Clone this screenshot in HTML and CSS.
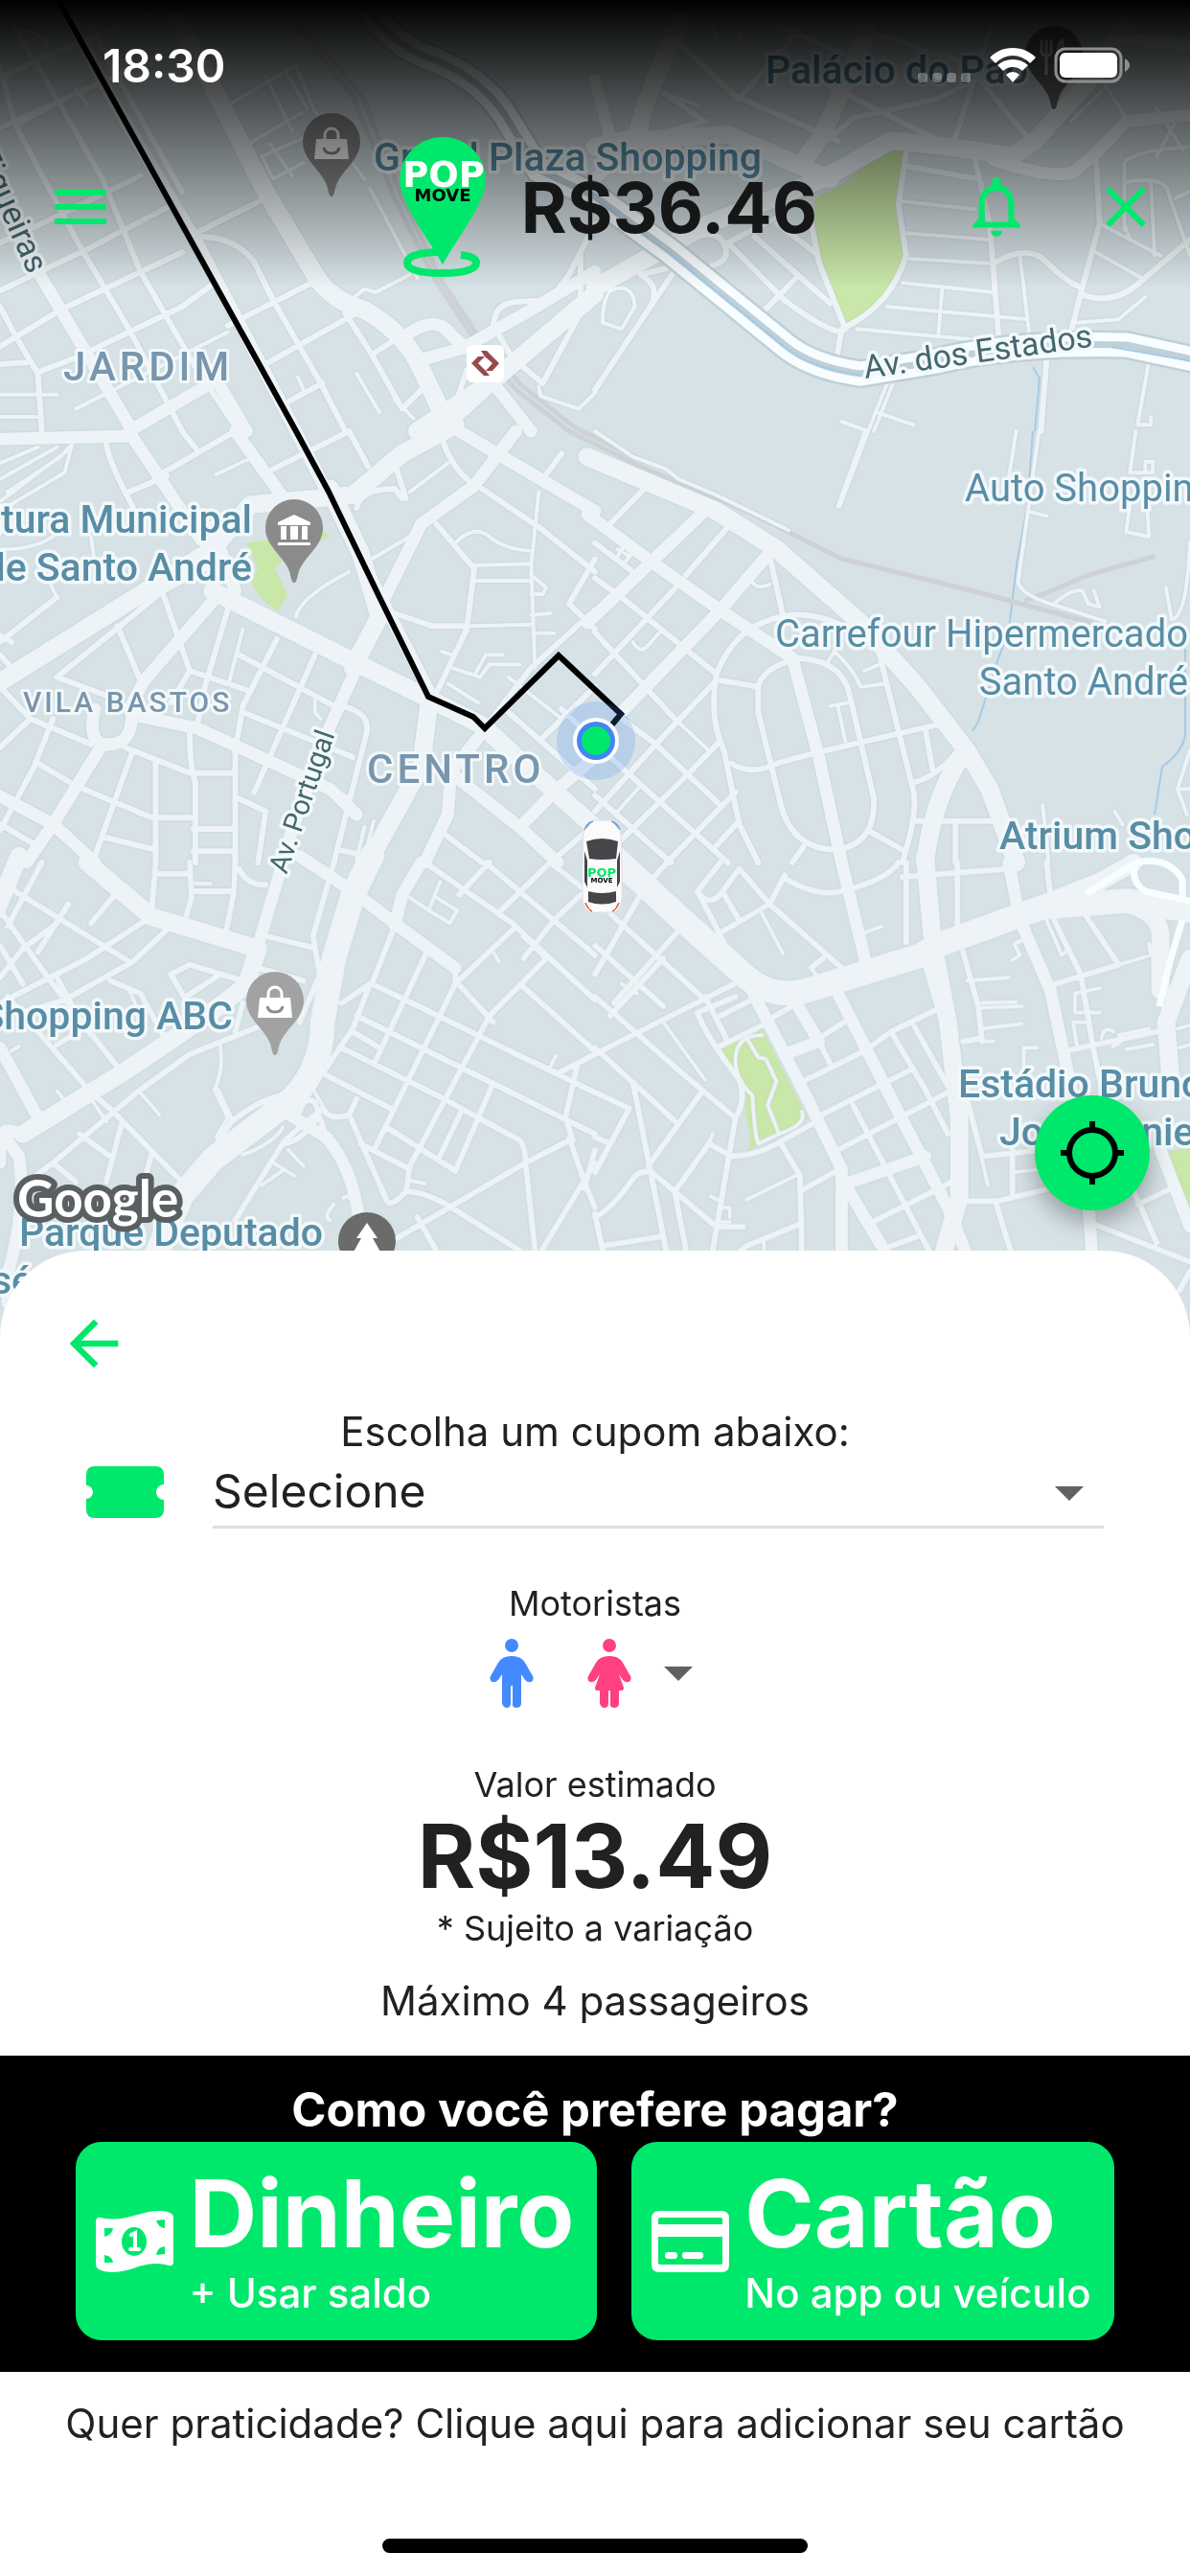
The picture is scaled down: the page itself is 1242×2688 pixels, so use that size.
FILE: index.html
```html
<!DOCTYPE html>
<html lang="pt-BR">
<head>
    <meta charset="UTF-8">
    <meta name="viewport" content="width=device-width, initial-scale=1.0">
    <title>Pop Move</title>
    <link rel="stylesheet" href="styles.css">
</head>
<body>
    <main class="app">
        <section class="hero">
            <svg class="map" viewBox="0 0 1242 1420" preserveAspectRatio="xMidYMin slice" role="img" aria-label="Mapa">
                <defs>
                    <path id="pin" d="M0 0C-3 0-3-6-5-12C-11-28-30-38-30-57A30 30 0 1 1 30-57C30-38 11-28 5-12C3-6 3 0 0 0Z"/>
                    <g id="bag">
                        <path d="M-16-60H16L18-39H-18Z" fill="#fff"/>
                        <path d="M-7-60V-64A7 7 0 0 1 7-64V-60" fill="none" stroke="#fff" stroke-width="3"/>
                        <path d="M-8-51Q-7-45 0-45T8-51" fill="none" stroke="#8a8a8a" stroke-width="3"/>
                    </g>
                    <linearGradient id="shade" x1="0" y1="0" x2="0" y2="1">
                        <stop offset="0" stop-color="#000"/>
                        <stop offset="1" stop-color="#000" stop-opacity="0"/>
                    </linearGradient>
                </defs>
                <rect width="1242" height="1420" fill="#d6e2e6"/>

                <!-- parks -->
                <g class="park">
                    <path transform="translate(621 0) scale(.396 .3333)" d="M820 460L790 640L815 800Q790 950 665 1020L600 830Q570 700 580 620L650 580L740 490Q770 460 820 460Z"/>
                    <path transform="translate(0 450) scale(.396 .3333)" d="M650 350L700 340L850 310L870 330L750 400L725 430L757 510L735 563Q690 540 660 470L680 430Z"/>
                    <path transform="translate(621 900) scale(.396 .3333)" d="M330 585L440 520L560 800L480 850L400 905Q420 870 395 790Q405 720 380 670ZM1490 910L1568 890V1110Z"/>
                </g>

                <!-- water and rail -->
                <path class="water" d="M1078 450L1072 530L1061 590L1053 657L1041 690L1021 753L1015 763M1237 677V767Q1234 785 1213 800L1205 850M1078 383L1085 395L1080 450"/>
                <path class="rail" d="M301 17L368 100L412 207L455 293L499 360L539 407L594 450L669 487L779 533L878 583L1017 617L1140 650M1069 627L1096 617L1136 600L1206 580"/>
                <path class="rail" d="M308 17L378 100L420 207L461 293L505 360L545 403L600 446L673 482"/>

                <g class="roads">
                    <!-- north west -->
                    <g transform="translate(0 0) scale(.396 .3333)">
                        <path class="r4" d="M470 60L700 600Q760 720 830 860Q870 940 960 970Q1050 1030 1100 1130L1180 1330M1100 1350L1290 1200L1568 920"/>
                        <path class="r3" d="M160 0L300 320L520 760L780 1350M-20 590L90 830L350 1350M340 1350L570 1190L650 1350M1070 1050Q1150 980 1190 1050L1230 1090M1100 1130L1220 1090L1400 970L1568 850M1300 1200L1400 1350M1180 1330L1300 1200"/>
                        <path class="r2" d="M0 245L150 160L260 110L420 30M0 400L300 240L380 190M0 760L110 700L370 550M0 910L230 780L440 650M0 1085L160 970L480 790M100 1165L200 1120L480 960L560 890M600 1020L830 880M700 1140L940 980M740 1270L850 1200M0 210L40 390L210 770L340 1030L480 1350M20 50L150 310L270 560L370 850M210 0L300 220L480 600M0 960L40 1050L100 1170L110 1350M370 850L520 1160L630 1350M500 740L700 620M520 740Q620 740 670 820L720 940L850 1210L910 1350M40 390L140 330M0 1140L70 1135M910 980L980 1110L1060 1280M980 1110L1060 1050M1230 1160L1180 1340M1060 1280L1120 1210M1300 1030Q1300 950 1360 945L1450 940L1500 860L1568 700M1310 1040L1350 1120L1430 1200L1530 980V800"/>
                        <path class="r1" d="M600 330L780 205L830 350L960 560M655 450L800 350M690 490L840 410M700 240L770 410M750 220L810 340M690 490L720 560L800 510M710 450L770 550M200 1280L600 1040M0 1235H150M0 1305H110M50 100Q100 90 130 150M200 280L230 330M975 590L1100 870M935 930L960 905L990 915L1080 860M940 1170L1000 1290M1040 1250L1090 1310M785 1180L800 1220M1420 1210L1425 1240L1525 1280L1568 1230"/>
                    </g>
                    <!-- north east -->
                    <g transform="translate(621 0) scale(.396 .3333)">
                        <path class="r4" d="M230 60Q130 300 110 430L0 460M100 440L350 420L620 560M720 90L600 420L540 520M0 900L300 700L600 560L780 440Q900 450 1100 490L1160 440L1290 270L1400 80"/>
                        <path class="r3" d="M0 250L40 430M110 430L0 560M1050 500Q1200 560 1260 540L1320 480L1400 380L1568 360M1380 120L1568 140"/>
                        <path class="r2" d="M100 0L370 300L640 440M180 290L290 380L100 440M380 310L560 60M620 430L680 370L900 310L1180 150M620 270L890 430M440 60L640 160M700 90L980 200M980 200L1140 430M1050 60L950 430M820 480L800 640L820 800Q780 960 650 1030L630 1170M660 1030L590 820L570 700M820 520L1010 560M1000 490L1040 700L1065 1070M1050 825Q1140 760 1190 820Q1240 880 1280 900M1320 480L1330 700L1280 920L1250 1060M1280 920Q1360 960 1430 890L1568 750M350 760L500 940Q600 1030 650 1040M350 760L480 680M420 740L620 950M480 700L580 790M440 980L530 870M0 1220L140 970L220 830M1190 1130L1175 1350M220 830L120 860Q180 900 140 970M230 760Q330 700 345 780Q350 820 310 830"/>
                        <path class="r1" d="M810 630L1000 655M820 730L1040 750M830 810L1050 825M810 885L1050 915M770 960L1140 1000M690 1030L1060 1070M1120 800L1145 1050M915 900L905 1050M1330 700L1490 800M1320 790L1440 870M1395 720V510Q1420 470 1568 460M1400 570Q1500 550 1510 600L1568 800M1465 570L1475 800M1410 750L1395 700M770 1200L720 1350M785 1200L735 1350M650 1320L720 1350M740 1290L840 1330M1460 1130L1430 1330M1270 1010L1380 1000L1450 930M1400 370L1330 240M1540 360L1480 490M1480 340L1550 470M1530 620L1568 600M1255 380L1340 280M40 910Q100 880 105 960L70 1030L20 1010Q20 940 40 910M1430 1330H1465V1305M320 130L300 30M380 120L420 40M180 290L270 330"/>
                    </g>
                    <!-- west -->
                    <g transform="translate(0 450) scale(.396 .3333)">
                        <path class="r4" d="M-20 800L560 370L660 230L930 200L1060 70L1200 -20M560 500L930 720L1100 820L1270 920L1370 1030L1568 1240M870 180L950 380L1000 580L930 740"/>
                        <path class="r3" d="M0 25L340 15M350 20L530 340M620 0L760 230M560 300L620 500M780 0L1150 860M990 580L1110 290L1250 170L1360 0M1210 0L1568 250M570 520L380 780L345 860Q360 990 270 980Q230 960 250 870M360 890L520 930L870 1120L940 1200M270 980L140 1230L70 1350M-20 1130L140 1230L250 1350M940 740L860 950L740 1350M1190 1040L1180 1200L1120 1350M1260 960L1180 1080M1200 1080L1370 1240L1470 1350M1370 1240L1460 1130L1568 1020"/>
                        <path class="r4" d="M1130 860L1110 1050L970 1350"/>
                        <path class="r2" d="M1568 560L1400 740L1270 940M150 770L430 500L590 400M0 660L150 520M150 770L310 840M0 640L30 660M310 610L370 780M430 510L500 750L650 810M600 560L540 800L520 920M730 650L640 860L620 1000V1350M830 700L670 1130M630 700L880 860M640 880L930 1020M500 750L450 850M500 940Q500 1050 515 1100V1350M330 990L500 1070H620M200 1110L400 1210H510M410 1030V1350M270 1270L410 1310M350 1000L250 1330M80 900L240 980M80 900L0 990M100 1040L200 1110M140 900L90 1050L0 1250M0 1230L100 1300M0 800L80 900M510 1245H620M510 1315H620M900 860Q980 880 965 950L880 1350M630 1150L700 1190L680 1350M820 1100L910 1145M890 1310L950 1325M920 0L970 110M1040 100L1070 210M940 240Q950 180 1040 180L1060 210M1160 0Q1180 100 1240 160M1270 180L1420 300L1568 440M1150 290L1250 430L1230 620L1150 820M1040 570L1140 610H1230M1480 70L1430 150M1568 400L1500 540L1568 620M1340 880L1568 1120M1430 960L1568 800M430 130L620 0M340 190L440 140M700 130L920 0M480 0L520 60M280 40Q290 100 330 190L360 260M1170 1260L1270 1350M1480 870L1568 970M0 700L30 740M1568 1230L1450 1350"/>
                        <path class="r1" d="M1250 420L1400 415M1250 468H1400M1230 610L1400 605M1420 190L1400 420L1410 740M1200 350Q1250 290 1290 330Q1330 370 1400 375M1190 740L1265 770L1290 730L1370 730M1325 700H1280L1250 765M1180 790L1260 850M1165 690L1190 700M1340 770L1480 900M780 580Q790 520 920 440M980 400L1080 330M1080 190L1180 100M570 135L650 90M640 620L605 780M0 220L190 50M0 100L100 50M20 190L160 80L190 40M0 150L150 50M0 250L170 130L190 40M0 370Q100 370 150 320M150 520L130 470M240 330L250 420M830 840V880L845 900M960 1240L940 1340M985 1220L970 1290L950 1350M1400 575L1450 570M1405 632H1460M1400 450L1440 490L1430 510H1400"/>
                    </g>
                    <!-- east -->
                    <g transform="translate(621 450) scale(.396 .3333)">
                        <path class="r4" d="M-20 80L120 150L320 250L480 370L700 600L850 800L980 1000L1040 1120L1110 1350M970 1010Q890 1150 870 1350"/>
                        <path class="r3" d="M-20 260L150 410L330 560L520 710L590 1020L650 1350M-20 600L280 260M70 880L330 560L460 380"/>
                        <path class="r2" d="M130 180L40 290M350 300L240 450M0 350L100 440M0 460L70 520L320 760M0 630L210 900M60 890L160 980L330 1170M40 1020L180 1170L350 1350M0 1140L200 1350M0 760L220 480M320 780L160 980L0 1190M330 970L240 1080L60 1290M370 1130L190 1350M380 1220L310 1310M320 760Q300 900 340 1000L380 1230L430 1350M320 760Q360 640 440 600Q550 540 670 620M540 710Q440 740 430 800V880L490 1170Q520 1310 640 1310Q740 1290 735 1150L670 820Q650 720 540 710M330 780L430 800M460 390L500 600M750 700L840 1130Q850 1200 810 1350M360 1040Q410 1080 480 1040Q560 1010 900 920M870 930L890 1060M840 1100Q900 1080 950 1010M720 1250L810 1310M840 1220H1060M950 1230V1350M550 1300L520 1350"/>
                        <path class="r1" d="M120 1110L60 1190M210 900L300 1000M410 460Q420 500 460 480M100 660Q120 700 140 670L170 630M640 860L660 970M620 860L670 850M630 690Q680 740 700 800L770 790M710 750L750 730M640 670L610 730M1180 1170L1195 1350M0 0L100 80L190 120L220 150L320 200L510 310M720 0L645 235M712 0L640 235M1110 0L1090 150M1170 0L1140 260L1115 470Q1120 510 1200 540L1345 595M1190 265L1140 250M1425 0L1410 130L1470 130V95H1450V130M1410 230L1400 315L1460 330L1455 230M1568 350Q1560 580 1520 590L1505 490M1210 540Q1260 490 1285 500L1300 540L1330 550L1315 500M1568 1000L1535 1120L1560 1200M1535 1120H1568M1370 1190L1390 1230M60 370L90 390M60 390L75 360M80 410L95 385"/>
                    </g>
                    <!-- south west -->
                    <g transform="translate(0 900) scale(.396 .3333)">
                        <path class="r5" d="M980 -20L930 100L880 300L850 500Q850 640 770 740L560 930L480 1040L400 1260"/>
                        <path class="r4" d="M230 0L400 170L680 270L650 380Q600 440 320 660L60 850M50 -20L-10 150"/>
                        <path class="r3" d="M740 20L670 300M790 -20L930 90L1040 190L1200 330M1110 0L1060 100L1040 200M0 580L110 820M60 850Q-10 820 20 870L50 920Q70 1080 20 1290V1380M750 780L860 860Q930 960 945 1110M0 860V940"/>
                        <path class="r2" d="M410 0L400 150M500 0L505 110L485 190M415 35H500M510 90H610M620 0L615 100L595 220M630 20Q650 70 700 70M310 90L240 190M40 90L340 310M180 130L100 280M385 180L230 300L0 440M440 210L350 310L170 430L60 470M0 150L120 350L240 540M20 200L110 0M150 190L60 270L0 360M0 260L60 380M150 360L210 490L310 640M20 420L240 720M290 370L370 410L430 540M150 570L290 470M450 350L500 320L640 370M450 350L490 430M580 350L490 420M680 330L800 370M700 230L820 265M880 0L825 230L850 400M850 330L790 500M640 440L620 530M690 510L500 600L360 720L140 940L60 1010M740 730Q690 740 610 810L560 900M260 740L290 770L480 1000M320 820L280 1000M210 850L290 920M140 940L200 1000M400 910L380 1000M750 870L640 1080L620 1120M840 790Q800 870 750 880M840 780L750 870M790 780Q800 730 830 750L860 860M850 770Q870 810 920 790L940 740M920 790L1020 1060Q1030 1080 1070 1030Q1120 1030 1190 1080L1370 1215M850 660L1030 770M900 580L1170 740L1370 870Q1385 890 1385 940L1410 1215M940 480L1568 850M980 380L1120 460L1568 720M1040 200L980 380M1200 330L1200 380L990 890M1125 280L990 620M900 440L975 380L930 520L850 660M1200 370L1300 500M930 530L1000 580M950 880L1080 960M1020 830L1200 965L1300 690M1215 780L1155 930M1070 1030L1080 950L1290 480L1440 300L1380 230M1200 380L1360 200M1040 1180L1385 940L1500 870M1500 860L1540 1000L1568 1080M1520 640L1490 800L1510 870M1120 0L1350 190L1440 290L1568 430M1280 0L1568 290M1450 0L1568 110M1290 0L1210 100M1568 60L1460 180L1380 300M1450 0L1320 150M1380 390L1568 590M1360 600L1470 660L1568 600M1568 940L1430 1210M1100 1110L1150 1215M1568 900L1540 1020"/>
                        <path class="r1" d="M510 65L555 66M580 570Q590 650 565 710L600 800L570 860M575 710L610 800M370 720L420 790M150 715L180 760M240 740L280 810M1080 110L1130 150L1160 60M1150 110L1205 150L1185 190L1130 150M690 1010L750 960M905 1050L925 1040L920 1050M880 1070Q850 1110 870 1120M1080 995L1120 1005M30 590L50 575M340 400L360 450M830 720L860 780M1300 280L1315 310M1450 640L1465 605M720 940L775 980M640 915Q720 880 745 830M760 900L800 950"/>
                    </g>
                    <!-- south east -->
                    <g transform="translate(621 900) scale(.396 .3333)">
                        <path class="r5" d="M30 -40L230 180L400 360Q470 430 560 400L860 290L900 260L1180 140L1400 120L1568 150"/>
                        <path class="r4" d="M870 -20L890 250L930 500L960 800L960 1050L920 1215M1180 130L1330 60L1420 0M1400 130Q1480 150 1490 220V400M1568 300L1505 500L1520 720"/>
                        <path class="r3" d="M400 370L560 740L650 960V1230M660 1010L770 1230M650 1010L870 920M650 0L715 320M1090 0L1120 180L1200 400L1290 900L1310 1230M640 410L790 760L930 1080L980 1230M530 440L590 560L500 600M1490 900L1568 1140"/>
                        <path class="r2" d="M820 0V250M955 0V210M810 45L1090 20M1190 0L1200 100M0 420L220 650L370 800M0 260L180 450M40 160L290 430M0 600L400 360M0 580L220 820M120 100L0 350M230 200L50 440M180 300L40 480M190 0L120 90M330 0L270 90M270 90Q300 140 330 100L380 20M270 90L340 250M330 220L460 130L500 40M340 100L380 180M380 20L460 130L660 340M570 330L600 300M500 50Q600 120 680 80Q770 50 800 0M320 580L440 510M270 470Q290 540 380 680Q400 740 370 800L310 1215M270 470L370 420M330 480L430 420M290 420L350 560M540 690L710 590L780 530L900 460M460 490L520 450M590 560L620 630M590 550L670 490M580 800L830 650M680 760L880 1215M640 900L930 720M740 1120L940 1000M780 530L870 710L930 850M840 510L930 700M870 320L920 520M300 880L360 920Q420 920 480 880L570 820M490 880L540 980L545 1215M540 1030L630 970M545 1130L400 1200L370 1230M0 1110Q40 1090 100 990Q120 960 150 970L320 1140L390 1140M100 690L190 1230M0 720L90 770L0 970M0 860L40 880M280 720L140 950M300 880L210 1030L240 1215M20 1200L180 1170M0 1100L20 1215M760 1210L850 1170M970 280L1010 450L1020 560M1200 385L1380 320M1210 180L1280 350L1310 560L1330 680M1290 160L1380 320M1240 590L1480 530M980 740L1020 920L1180 900M970 1060H1060L1200 1020M1055 1060L1095 1215M1100 900V1040M1420 1030L1480 1190M1430 1070L1520 1020M1310 1130L1568 1250M970 560L1020 550M1568 1280L1540 1340"/>
                        <path class="r1" d="M440 160L495 285M180 500L290 680M400 1055L530 980M445 1180V1215M585 355L570 330M710 220L755 200M980 370L1090 360M1010 455L1125 450M1020 440L1110 437M1020 520L1125 505M1020 560H1050M1190 180L1230 290L1250 270M1380 320L1465 290L1460 255M1265 410V470H1330M1265 410L1330 393M1270 570L1260 500H1300M1130 640V580H1165M1020 930L1035 1010M1100 970L1180 960M1130 240L1105 255L1120 290L1100 305M1335 550Q1340 510 1368 530M1365 575Q1400 560 1380 540L1460 520M1400 585L1470 570M1535 520L1568 510M1540 580L1568 570M1540 370L1568 365M310 850L300 880M330 1080H355V1110M330 1125H355M305 1045L330 1060M70 380L110 410M405 560L430 610L450 615L478 685L455 760L485 850M440 540Q370 540 370 620Q370 680 415 730Q420 850 430 880L485 850Q560 820 545 780"/>
                    </g>
                </g>

                <!-- Av. dos Estados and the viaduct -->
                <g class="highway">
                    <path class="casing" d="M375 -10Q400 45 455 63Q503 83 527 120L562 177L621 205L700 263L819 360Q847 383 898 390L977 377Q1057 357 1176 360L1250 376"/>
                    <path class="lane" d="M375 -10Q400 45 455 63Q503 83 527 120L562 177L621 205L700 263L819 360Q847 383 898 390L977 377Q1057 357 1176 360L1250 376"/>
                    <path class="median" d="M375 -10Q400 45 455 63Q503 83 527 120L562 177L621 205L700 263L819 360Q847 383 898 390L977 377Q1057 357 1176 360L1250 376"/>
                    <path class="water" d="M621 208L700 265L819 362Q847 385 898 391M1160 362L1250 378"/>
                    <path class="ramp" d="M1134 932L1186 900Q1220 893 1234 918V936M1186 900Q1178 918 1195 930L1242 940M1234 960L1222 1000L1210 1050"/>
                </g>

                <!-- places -->
                <g class="poi">
                    <text class="major" x="799" y="87">Palácio do Pão</text>
                    <text class="major" x="390" y="178">Grand Plaza Shopping</text>
                    <text class="major" x="263" y="556" text-anchor="end">Prefeitura Municipal</text>
                    <text class="major" x="263" y="606" text-anchor="end">de Santo André</text>
                    <text x="1007" y="523">Auto Shopping</text>
                    <text x="1240" y="675" text-anchor="end">Carrefour Hipermercado</text>
                    <text x="1240" y="725" text-anchor="end">Santo André</text>
                    <text class="major" x="1043" y="886">Atrium Shopping</text>
                    <text class="major" x="243" y="1074" text-anchor="end">Shopping ABC</text>
                    <text class="major" x="20" y="1300">Parque Deputado</text>
                    <text class="major" x="34" y="1350" text-anchor="end">José</text>
                    <text class="major" x="1000" y="1145">Estádio Bruno</text>
                    <text class="major" x="1043" y="1195">José Daniel</text>
                </g>
                <g class="district">
                    <text x="66" y="397">JARDIM</text>
                    <text x="383" y="817">CENTRO</text>
                    <text class="small" x="24" y="743">VILA BASTOS</text>
                </g>
                <g class="street">
                    <text transform="translate(903 395) rotate(-8)">Av. dos Estados</text>
                    <text class="narrow" transform="translate(299 913) rotate(-71)">Av. Portugal</text>
                    <text transform="translate(30 287) rotate(66)" text-anchor="end">R. das Figueiras</text>
                </g>

                <g transform="translate(346 205)"><use href="#pin" fill="#8a8a8a"/><use href="#bag"/></g>
                <g transform="translate(287 1101)"><use href="#pin" fill="#a2a2a2"/><use href="#bag"/></g>
                <g transform="translate(1100 114)">
                    <use href="#pin" fill="#6b6b6b"/>
                    <path d="M-13-72V-60Q-13-56-8-56V-36M-8-72V-58M-3-72V-60Q-3-56-8-56M9-36V-72Q3-68 4-52H9" fill="none" stroke="#ddd" stroke-width="3"/>
                </g>
                <g transform="translate(307 608)">
                    <use href="#pin" fill="#8b8b8b"/>
                    <path d="M0-71L17-63V-60H-17V-63ZM-14-59H-8V-45H-14ZM-4-59H4V-45H-4ZM8-59H14V-45H8ZM-17-42H17V-39H-17Z" fill="#fff"/>
                </g>
                <g transform="translate(383 1352)">
                    <use href="#pin" fill="#6b6b6b"/>
                    <path d="M0-76L11-60H6L15-44H-15L-6-60H-11Z" fill="#fff"/>
                </g>
                <g transform="translate(487 360)">
                    <rect width="39" height="39" rx="6" fill="#fff"/>
                    <path d="M15 6H21L34 19L27 27H20L27 19L19 12ZM24 32H18L5 19L12 12H19L12 19L20 27Z" fill="#97494e"/>
                </g>

                <!-- route -->
                <path class="route" d="M58 -5L309 450L343 513L396 623L447 727L494 748L506 760L583 684L648 745L639 756"/>
                <circle cx="622" cy="773" r="41" fill="#4285f4" fill-opacity=".2"/>
                <circle cx="622" cy="773" r="24" fill="#fff"/>
                <circle cx="622" cy="773" r="20" fill="#4285f4"/>
                <circle cx="622" cy="773" r="15" fill="#00e86b"/>

                <!-- car -->
                <g transform="translate(608 856)">
                    <path d="M10 0H31Q38 2 40 14L41 50V82Q40 94 31 96H10Q1 94 0 82V50L1 14Q3 2 10 0Z" fill="#fbfbfb" stroke="#e3dfe4" stroke-width="1"/>
                    <path d="M2 10Q4 2 11 1L8 3ZM39 10Q37 2 30 1L33 3Z" fill="#6fa0d0" stroke="#6fa0d0"/>
                    <path d="M3 86Q5 93 10 95L7 93ZM38 86Q36 93 31 95L34 93Z" fill="#e2482a" stroke="#e2482a"/>
                    <path d="M4 22Q20 16 37 22L35 40Q20 42 7 40ZM2 32L5 42V70L2 64ZM39 32L36 42V70L39 64ZM6 74Q20 78 35 74L35 85Q20 90 6 85Z" fill="#454649"/>
                    <text class="car-pop" x="20" y="59" text-anchor="middle">POP</text>
                    <text class="car-move" x="20" y="65" text-anchor="middle">MOVE</text>
                </g>

                <text class="google" x="18" y="1270">Google</text>
                <rect width="1242" height="300" fill="url(#shade)"/>
            </svg>

            <div class="status-bar">
                <span class="time">18:30</span>
                <div class="status-icons">
                    <svg class="signal" viewBox="0 0 56 36" width="56" height="36">
                        <rect y="26" width="10" height="10" rx="3"/>
                        <rect x="15" y="26" width="10" height="10" rx="3"/>
                        <rect x="30" y="26" width="10" height="10" rx="3"/>
                        <rect x="45" y="26" width="10" height="10" rx="3"/>
                    </svg>
                    <svg viewBox="0 0 48 36" width="48" height="36" fill="#fff">
                        <path d="M24 0C34 0 42 4 48 10L42 16Q34 8 24 8T6 16L0 10C6 4 14 0 24 0Z"/>
                        <path d="M24 12Q33 12 40 18L34 24Q30 20 24 20T14 24L8 18Q15 12 24 12Z"/>
                        <path d="M24 25Q28 25 31 28L24 36L17 28Q20 25 24 25Z"/>
                    </svg>
                    <svg viewBox="0 0 80 38" width="80" height="38">
                        <rect x="2" y="2" width="68" height="34" rx="10" fill="none" stroke="#8d8f90" stroke-width="3"/>
                        <rect x="6" y="6" width="60" height="26" rx="6" fill="#fff"/>
                        <path d="M74 12Q79 15 79 19T74 26Z" fill="#8d8f90"/>
                    </svg>
                </div>
            </div>

            <header class="top-bar">
                <button class="icon-btn" type="button" aria-label="Menu">
                    <svg viewBox="0 0 24 24" width="72" height="72"><path d="M3 18h18v-2H3v2zm0-5h18v-2H3v2zm0-7v2h18V6H3z"/></svg>
                </button>
                <div class="brand">
                    <svg viewBox="0 0 92 148" width="92" height="148">
                        <path d="M46 1A45 45 0 0 1 91 45C91 70 62 105 46 134C30 105 1 70 1 45A45 45 0 0 1 46 1Z" fill="#00e86b"/>
                        <path d="M41 121Q9 122 9 132Q9 143 45 143T81 132Q81 126 65 124" fill="none" stroke="#00e86b" stroke-width="8"/>
                        <text class="logo-pop" x="47" y="53" text-anchor="middle">POP</text>
                        <text class="logo-move" x="46" y="68" text-anchor="middle">MOVE</text>
                    </svg>
                    <span class="balance">R$36.46</span>
                </div>
                <button class="icon-btn" type="button" aria-label="Notificações">
                    <svg viewBox="0 0 24 24" width="74" height="74"><path d="M10 20h4a2 2 0 0 1-4 0zM18 16v-5c0-3.070-1.630-5.640-4.500-6.320V3.500c0-.83-.67-1.500-1.500-1.500s-1.500.67-1.500 1.500v1.180C7.640 5.360 6 7.920 6 11v5l-2 2v1h16v-1l-2-2zm-2 1H8v-6c0-2.480 1.510-4.500 4-4.500s4 2.020 4 4.500v6z"/></svg>
                </button>
                <button class="icon-btn" type="button" aria-label="Fechar">
                    <svg viewBox="0 0 24 24" width="72" height="72"><path d="M19 6.410L17.590 5 12 10.590 6.410 5 5 6.410 10.590 12 5 17.590 6.410 19 12 13.410 17.590 19 19 17.590 13.410 12z"/></svg>
                </button>
            </header>

            <button class="locate" type="button" aria-label="Minha localização">
                <svg viewBox="0 0 66 66" width="66" height="66" fill="none" stroke="#000" stroke-width="6">
                    <circle cx="33" cy="33" r="24"/>
                    <path d="M33 0v9M33 57v9M0 33h9M57 33h9"/>
                </svg>
            </button>
        </section>

        <section class="sheet">
            <button class="icon-btn back" type="button" aria-label="Voltar">
                <svg viewBox="0 0 24 24" width="76" height="76"><path d="M20 11H7.830l5.590-5.590L12 4l-8 8 8 8 1.410-1.410L7.830 13H20v-2z"/></svg>
            </button>

            <label class="body-text coupon-label" for="coupon">Escolha um cupom abaixo:</label>
            <div class="coupon">
                <svg viewBox="0 0 81 54" width="81" height="54" fill="#00e86b">
                    <path d="M9 0H72Q81 0 81 9V19A8 8 0 0 0 81 35V45Q81 54 72 54H9Q0 54 0 45V34A7 7 0 0 0 0 20V9Q0 0 9 0Z"/>
                </svg>
                <div class="coupon-field">
                    <select id="coupon">
                        <option>Selecione</option>
                    </select>
                    <svg class="caret" viewBox="0 0 30 15" width="30" height="15"><path d="M0 0h30L15 15z"/></svg>
                </div>
            </div>

            <label class="small-text drivers-label" for="drivers">Motoristas</label>
            <div class="drivers">
                <svg viewBox="0 0 46 72" width="46" height="72" fill="#448aff">
                    <circle cx="23" cy="7" r="7"/>
                    <path d="M23 18Q33 18 37 25L45 39Q47 43 43 45Q40 46 37 43L33 37V67Q33 72 28 72T24 67V49H22V67Q22 72 18 72T13 67V37L9 43Q6 46 3 45Q-1 43 1 39L9 25Q13 18 23 18Z"/>
                </svg>
                <svg viewBox="0 0 46 72" width="46" height="72" fill="#ff4081">
                    <circle cx="23" cy="7" r="7"/>
                    <path d="M23 18Q33 18 37 25L45 39Q47 43 43 45Q40 46 37 43L33 37L38 51Q38 54 36 54H33V67Q33 72 28 72T24 67V54H22V67Q22 72 18 72T13 67V54H10Q8 54 8 51L13 37L9 43Q6 46 3 45Q-1 43 1 39L9 25Q13 18 23 18Z"/>
                </svg>
                <svg class="caret" viewBox="0 0 30 15" width="30" height="15"><path d="M0 0h30L15 15z"/></svg>
                <select id="drivers">
                    <option>Todos</option>
                </select>
            </div>

            <p class="small-text estimate-label">Valor estimado</p>
            <p class="price">R$13.49</p>
            <p class="small-text">* Sujeito a variação</p>
            <p class="body-text capacity">Máximo 4 passageiros</p>

            <div class="payment">
                <h2>Como você prefere pagar?</h2>
                <div class="pay-options">
                    <button class="pay-btn" type="button">
                        <svg viewBox="0 0 81 64" width="81" height="64">
                            <path d="M5 7C30 13 45 0 67 0Q75 0 79 3Q81 4 81 8V53Q81 58 76 57C50 50 40 64 18 64Q8 64 3 61Q0 59 0 56V12Q0 6 5 7Z" fill="#fff"/>
                            <path d="M9 18H18Q17 25 9 27ZM72 9V18Q65 17 63 10ZM9 46Q17 47 18 54H9ZM72 37V45L63 46Q64 38 72 37Z" fill="#00e86b"/>
                            <ellipse cx="40" cy="32" rx="13" ry="15" fill="#00e86b"/>
                            <path d="M37 25L41 23V39M36 40H45" fill="none" stroke="#fff" stroke-width="4" stroke-linecap="round"/>
                        </svg>
                        <span class="pay-text">
                            <span class="pay-title">Dinheiro</span>
                            <span class="pay-sub">+ Usar saldo</span>
                        </span>
                    </button>
                    <button class="pay-btn" type="button">
                        <svg viewBox="0 0 81 64" width="81" height="64" fill="#fff">
                            <path fill-rule="evenodd" d="M8 0H73Q81 0 81 8V56Q81 64 73 64H8Q0 64 0 56V8Q0 0 8 0ZM9 7Q7 7 7 9V14H74V9Q74 7 72 7ZM7 27V54Q7 56 9 56H72Q74 56 74 54V27Z"/>
                            <rect x="14" y="43" width="13" height="7" rx="3"/>
                            <rect x="32" y="43" width="22" height="7" rx="3"/>
                        </svg>
                        <span class="pay-text">
                            <span class="pay-title">Cartão</span>
                            <span class="pay-sub">No app ou veículo</span>
                        </span>
                    </button>
                </div>
            </div>

            <a class="body-text add-card" href="#">Quer praticidade? Clique aqui para adicionar seu cartão</a>
            <div class="home-indicator"></div>
        </section>
    </main>
</body>
</html>
```
FILE: styles.css
```css
* {
    box-sizing: border-box;
}

body {
    margin: 0;
    font-family: Inter, "Liberation Sans", sans-serif;
    color: #212121;
    background: #fff;
}

p, h2 {
    margin: 0;
}

button {
    padding: 0;
    border: none;
    background: none;
    font-family: inherit;
    cursor: pointer;
}

svg {
    display: block;
}

.app {
    display: flex;
    flex-direction: column;
    min-height: 100vh;
}

/* ---------- map ---------- */

.hero {
    position: relative;
    flex: 1;
    min-height: 600px;
}

.map {
    position: absolute;
    top: 0;
    left: 0;
    width: 100%;
    height: calc(100% + 90px);
}

.map text {
    font-family: Roboto, sans-serif;
    paint-order: stroke;
    stroke-linejoin: round;
}

.park path {
    fill: #c9e7a8;
}

.water {
    fill: none;
    stroke: #a5cbe6;
    stroke-width: 2;
}

.rail {
    fill: none;
    stroke: #ced2d6;
    stroke-width: 5;
}

.roads {
    filter: drop-shadow(0 0 1px #bccfd4);
}

.roads path {
    fill: none;
    stroke: #edf3f6;
    stroke-linejoin: round;
    stroke-linecap: round;
    vector-effect: non-scaling-stroke;
}

.roads .r1 { stroke-width: 4; }
.roads .r2 { stroke-width: 6; }
.roads .r3 { stroke-width: 13; }
.roads .r4 { stroke-width: 19; }
.roads .r5 { stroke-width: 26; }

.highway path {
    fill: none;
}

.highway .casing {
    stroke: #bfd0d7;
    stroke-width: 30;
}

.highway .lane {
    stroke: #f8fdff;
    stroke-width: 25;
}

.highway .median {
    stroke: #bfd0d7;
    stroke-width: 7;
}

.highway .water {
    stroke: #a5cbe6;
}

.highway .ramp {
    stroke: #f8fdff;
    stroke-width: 7;
}

.poi text {
    font-size: 40px;
    fill: #588da6;
    stroke: #f3f8fa;
    stroke-width: 7;
}

.poi .major {
    font-size: 41px;
    font-weight: 500;
}

.district text {
    font-size: 42px;
    font-weight: 500;
    letter-spacing: 4px;
    fill: #7896ad;
    stroke: #f3f8fa;
    stroke-width: 6;
}

.district .small {
    font-size: 30px;
    letter-spacing: 3px;
}

.street text {
    font-size: 34px;
    fill: #43676f;
    stroke: #f3f8fa;
    stroke-width: 7;
}

.street .narrow {
    font-size: 29px;
}

.map .google {
    font-family: Lato, sans-serif;
    font-size: 53px;
    font-weight: 700;
    fill: #fff;
    stroke: #5a5f61;
    stroke-width: 12;
}

.route {
    fill: none;
    stroke: #000;
    stroke-width: 6;
}

.map .car-pop,
.map .car-move,
.logo-pop,
.logo-move {
    font-family: "DejaVu Sans", sans-serif;
    font-weight: 700;
}

.map .car-pop {
    font-size: 13px;
    fill: #00e86b;
}

.map .car-move {
    font-size: 7px;
    fill: #000;
}

.logo-pop {
    font-size: 37px;
    fill: #fff;
}

.logo-move {
    font-size: 18px;
    fill: #000;
}

/* ---------- top bars ---------- */

.status-bar {
    position: relative;
    display: flex;
    align-items: center;
    justify-content: space-between;
    height: 136px;
    padding: 0 62px 0 107px;
}

.time {
    font-size: 48px;
    font-weight: 600;
    color: #fff;
}

.status-icons {
    display: flex;
    align-items: center;
    gap: 19px;
}

.signal {
    fill: rgba(255, 255, 255, 0.3);
}

.top-bar {
    position: relative;
    display: flex;
    align-items: center;
    height: 160px;
    padding: 0 31px 0 48px;
}

.icon-btn {
    fill: #00e86b;
}

.icon-btn + .icon-btn {
    margin-left: 62px;
}

.brand {
    flex: 1;
    display: flex;
    align-items: center;
    justify-content: center;
    gap: 36px;
    padding-left: 146px;
}

.balance {
    font-size: 73px;
    font-weight: 700;
    color: #151717;
}

.locate {
    position: absolute;
    right: 42px;
    bottom: 42px;
    display: flex;
    align-items: center;
    justify-content: center;
    width: 120px;
    height: 120px;
    border-radius: 50%;
    background: #00e86b;
    box-shadow: 0 12px 24px rgba(0, 0, 0, 0.3);
}

/* ---------- bottom sheet ---------- */

.sheet {
    position: relative;
    display: flex;
    flex-direction: column;
    align-items: center;
    padding: 59px 0 24px;
    border-radius: 90px 90px 0 0;
    background: #fff;
}

.body-text {
    font-size: 42px;
    line-height: 50px;
}

.small-text {
    font-size: 36px;
    line-height: 44px;
}

.back {
    align-self: flex-start;
    margin-left: 60px;
}

.coupon-label {
    margin-top: 29px;
}

.coupon {
    align-self: stretch;
    display: flex;
    align-items: center;
    gap: 51px;
    padding: 0 90px;
}

.coupon-field {
    position: relative;
    flex: 1;
    border-bottom: 3px solid #dedede;
}

.coupon-field select {
    display: block;
    width: 100%;
    height: 73px;
    padding: 0;
    border: none;
    background: none;
    appearance: none;
    font-family: inherit;
    font-size: 48px;
    color: #212121;
}

.caret {
    fill: #616161;
}

.coupon-field .caret {
    position: absolute;
    top: 32px;
    right: 21px;
    pointer-events: none;
}

.drivers-label {
    margin-top: 56px;
}

.drivers {
    position: relative;
    display: flex;
    align-items: center;
    gap: 34px;
    margin-top: 15px;
    padding-right: 8px;
}

.drivers svg:first-child {
    margin-right: 22px;
}

/* the native list opens over the icons */
.drivers select {
    position: absolute;
    inset: 0;
    width: 100%;
    opacity: 0;
}

.estimate-label {
    margin-top: 58px;
}

.price {
    font-size: 92px;
    font-weight: 700;
    line-height: 106px;
}

.capacity {
    margin-top: 29px;
}

.payment {
    align-self: stretch;
    margin-top: 32px;
    padding: 29px 0 33px;
    background: #000;
    text-align: center;
}

.payment h2 {
    font-size: 49px;
    font-weight: 700;
    line-height: 56px;
    color: #fff;
}

.pay-options {
    display: flex;
    justify-content: center;
    gap: 36px;
    margin-top: 5px;
}

.pay-btn {
    display: flex;
    align-items: center;
    gap: 16px;
    height: 207px;
    padding: 0 24px 0 21px;
    border-radius: 27px;
    background: #00e86b;
    color: #fff;
    text-align: left;
}

.pay-text {
    display: flex;
    flex-direction: column;
    gap: 8px;
}

.pay-title {
    font-size: 98px;
    font-weight: 700;
    line-height: 100px;
}

.pay-sub {
    font-size: 42px;
    font-weight: 500;
    line-height: 50px;
}

.add-card {
    margin-top: 29px;
    color: #212121;
    text-decoration: none;
}

.home-indicator {
    width: 444px;
    height: 15px;
    margin-top: 95px;
    border-radius: 8px;
    background: #000;
}
```
